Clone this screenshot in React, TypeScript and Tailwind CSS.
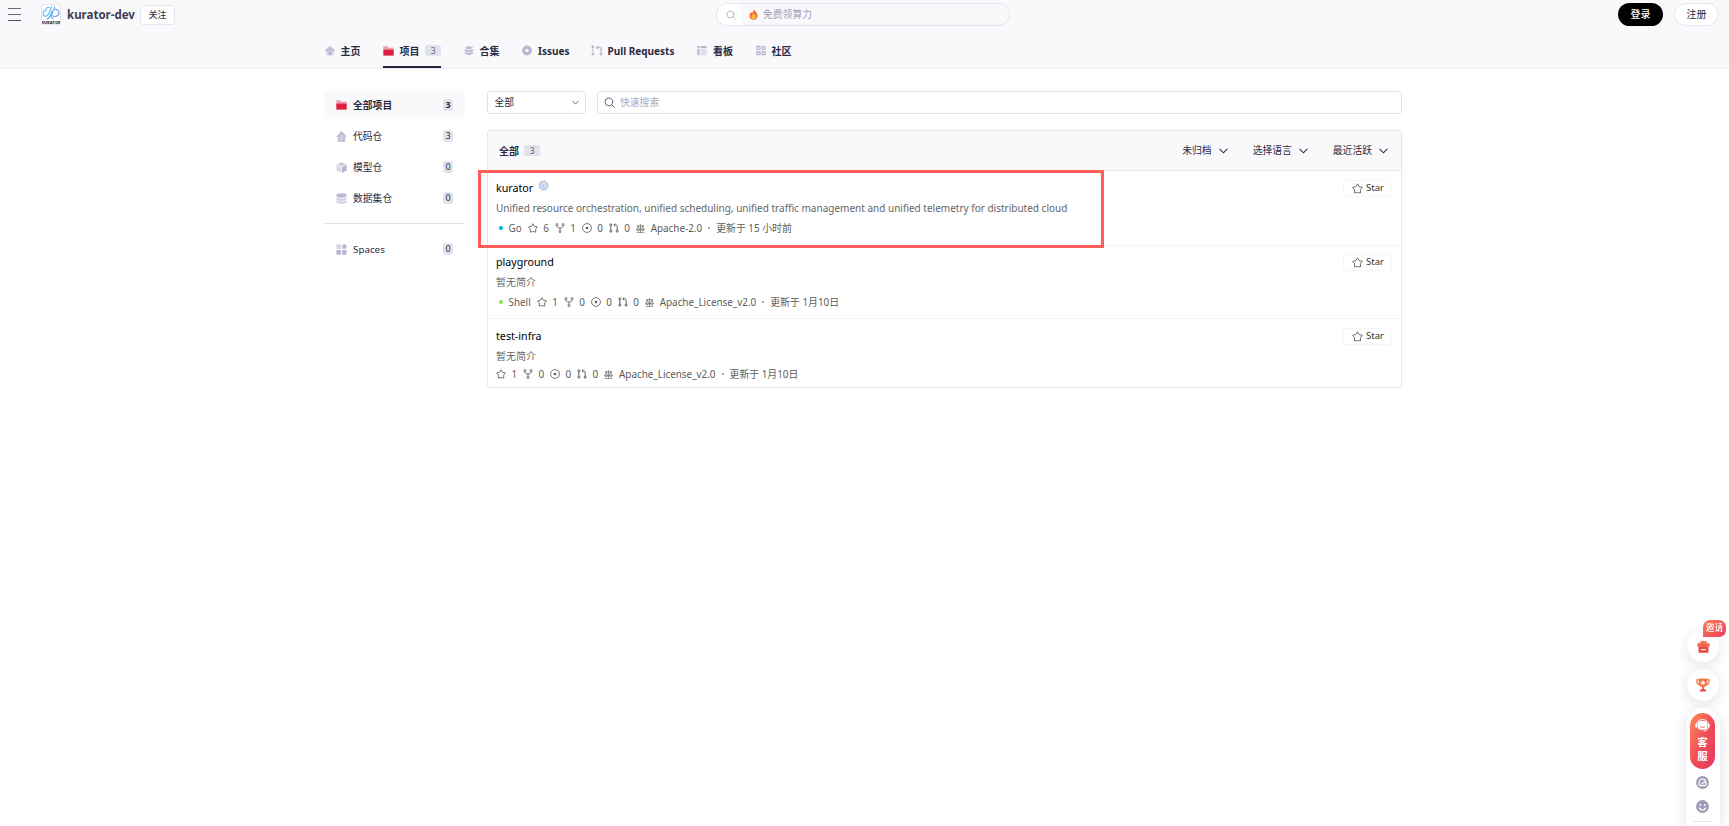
import type { ReactNode } from 'react';
import clsx from 'clsx';

interface IconProps {
  className?: string;
}

/**
 * 图标
 */
function HomeIcon({ className }: IconProps) {
  return (
    <svg className={className} viewBox="0 0 12 12">
      <path d="M1.6 5.500h8.800v6.200H1.600z" fill="#d5d4e3" />
      <path d="M6 .2 11.800 5.800v1.300H.2V5.800z" fill="#c3c2d6" />
      <path d="M4.500 7.700h3v4h-3z" fill="#b3b2cb" />
    </svg>
  );
}

function FolderIcon({ className }: IconProps) {
  return (
    <svg className={className} viewBox="0 0 12 11">
      <path d="M.3.4h4.4l1.2 1.5h5.8V6H.3z" fill="#f09dac" />
      <path d="M.3 4h11.4v6.6H.3z" fill="#dd2040" />
    </svg>
  );
}

function LayersIcon({ className }: IconProps) {
  return (
    <svg className={className} viewBox="0 0 12 12" fill="#b9b8cf">
      <path d="M6 .5 11.500 2.700 6 4.900.5 2.700z" />
      <path d="M.5 5.300 2.400 4.500 6 6l3.600-1.500 1.900.8v.9L6 8.300.5 6.200z" />
      <path d="M.5 8.600 2.400 7.800 6 9.300l3.600-1.500 1.900.8v.9L6 11.600.5 9.500z" />
    </svg>
  );
}

function IssueSolidIcon({ className }: IconProps) {
  return (
    <svg className={className} viewBox="0 0 12 12">
      <circle cx="6" cy="6" r="4" fill="none" stroke="#b9b8cf" strokeWidth="3.8" />
      <circle cx="6" cy="6" r="1.6" fill="#f1f1f6" />
    </svg>
  );
}

function PullSolidIcon({ className }: IconProps) {
  return (
    <svg className={className} viewBox="0 0 14 12" fill="#b9b8cf">
      <circle cx="2.2" cy="2" r="1.7" />
      <circle cx="2.2" cy="10" r="1.7" />
      <circle cx="11.8" cy="10" r="1.7" />
      <path d="M5.400 2.700 8.600.1v1.400h1.100c1.700 0 2.900 1.100 2.900 2.800v4H11v-4c0-.8-.5-1.200-1.400-1.200h-1v2z" />
      <path d="M1.500 4h1.400v4H1.500z" opacity=".7" />
    </svg>
  );
}

function BoardIcon({ className }: IconProps) {
  return (
    <svg className={className} viewBox="0 0 12 12" fill="#b9b8cf">
      <path d="M.4.6H3v2.700H.4zM4.200.6h7.400v2.700H4.200zM.4 4.300H3v7.300H.4z" />
      <path d="M4.200 4.300h7.400v7.300H4.200z" fill="#dfdfe9" />
    </svg>
  );
}

function CommunityIcon({ className }: IconProps) {
  return (
    <svg className={className} viewBox="0 0 12 12" fill="none" stroke="#b9b8cf" strokeWidth="1.7">
      <path d="M1.1 1.1h3.500v3.500H1.100zM1.100 7.400h3.500v3.500H1.100zM7.400 7.400h3.500v3.500H7.400z" />
      <circle cx="9.2" cy="2.9" r="1.9" />
    </svg>
  );
}

function RepoIcon({ className }: IconProps) {
  return (
    <svg className={className} viewBox="0 0 12 12">
      <path d="M6 .1 11.800 6.300H.2z" fill="#b9b8cf" />
      <path d="M2 5h8v6.700H2z" fill="#bebdd2" />
      <path d="M4 5.400h4M4 7.400h4M4 9.400h4" stroke="#f3f3f8" strokeWidth=".8" />
    </svg>
  );
}

function ModelIcon({ className }: IconProps) {
  return (
    <svg className={className} viewBox="0 0 12 12">
      <path d="M6 .3 11.500 2.500 6 4.900.5 2.500z" fill="#cccbdd" />
      <path d="M.4 3.300 5.600 5.600v6.200L.4 9.400z" fill="#d8d7e5" />
      <path d="M11.600 3.300 6.400 5.600v6.200l5.200-2.400z" fill="#b3b2cb" />
    </svg>
  );
}

function DatasetIcon({ className }: IconProps) {
  return (
    <svg className={className} viewBox="0 0 12 12">
      <path d="M.6 2.3h10.8v7.5c0 1-2.2 1.8-5.4 1.8S.6 10.8.6 9.8z" fill="#cfcedf" />
      <ellipse cx="6" cy="2.3" rx="5.4" ry="1.9" fill="#b9b8cf" />
      <path d="M.6 5c1.5 1.5 9.3 1.5 10.8 0M.6 8c1.5 1.5 9.3 1.5 10.8 0" fill="none" stroke="#fff" strokeWidth=".8" />
    </svg>
  );
}

function SpacesIcon({ className }: IconProps) {
  return (
    <svg className={className} viewBox="0 0 12 12">
      <rect x=".4" y=".4" width="5" height="5" rx=".6" fill="#d5d4e3" />
      <circle cx="9" cy="2.9" r="2.6" fill="#b9b8cf" />
      <rect x=".4" y="6.6" width="5" height="5" rx=".6" fill="#b9b8cf" />
      <rect x="6.6" y="6.6" width="5" height="5" rx=".6" fill="#b9b8cf" />
    </svg>
  );
}

function SearchIcon({ className }: IconProps) {
  return (
    <svg className={className} viewBox="0 0 12 12" fill="none" stroke="currentColor" strokeLinecap="round">
      <circle cx="5.3" cy="5.3" r="4.2" />
      <path d="m8.4 8.4 2.9 2.9" />
    </svg>
  );
}

function ChevronIcon({ className }: IconProps) {
  return (
    <svg className={className} viewBox="0 0 12 7" fill="none" stroke="currentColor" strokeWidth="1.4">
      <path d="m.8.8 5.2 5.2L11.2.8" />
    </svg>
  );
}

function StarIcon({ className }: IconProps) {
  return (
    <svg className={className} viewBox="0 0 12 12" fill="none" stroke="currentColor" strokeLinejoin="round">
      <path d="M6 .9 7.7 3.9 11.3 4.7 9.2 7.3 9.3 10.9 6 10.3 2.7 10.9 2.8 7.3.7 4.7 4.3 3.9z" />
    </svg>
  );
}

function ForkIcon({ className }: IconProps) {
  return (
    <svg className={className} viewBox="0 0 12 12" fill="none" stroke="currentColor">
      <circle cx="2.3" cy="2" r="1.3" />
      <circle cx="9.7" cy="2" r="1.3" />
      <circle cx="6" cy="10.2" r="1.3" />
      <path d="M2.300 3.300c0 2.200 1.500 2.600 3.700 2.600s3.700-.4 3.700-2.600M6 5.900v3" />
    </svg>
  );
}

function IssueIcon({ className }: IconProps) {
  return (
    <svg className={className} viewBox="0 0 12 12" fill="none" stroke="currentColor">
      <circle cx="6" cy="6" r="5.3" />
      <circle cx="6" cy="6" r="1.6" fill="currentColor" stroke="none" />
    </svg>
  );
}

function PullIcon({ className }: IconProps) {
  return (
    <svg className={className} viewBox="0 0 12 12" fill="none" stroke="currentColor" strokeWidth="1.2">
      <circle cx="2.2" cy="2.2" r="1.2" />
      <circle cx="2.2" cy="9.8" r="1.2" />
      <circle cx="9.8" cy="9.8" r="1.2" />
      <path d="M2.2 3.5v5M9.8 8.5V4c0-1.2-.6-1.8-1.7-1.8H6M7.5.6 5.9 2.2l1.6 1.6" />
    </svg>
  );
}

function LicenseIcon({ className }: IconProps) {
  return (
    <svg className={className} viewBox="0 0 12 12" fill="none" stroke="currentColor" strokeWidth=".9">
      <path d="M6 .3v11M1.200 2.300h9.600M.8 11.200h10.400M3 2.500 1 7.500M3 2.500l1.900 5M9 2.500l-1.900 5M9 2.500l2 5" />
      <path d="M.7 7.500c.4 1.700 4 1.700 4.400 0zM6.900 7.500c.4 1.700 4 1.700 4.400 0z" />
    </svg>
  );
}

function GearBadge({ className }: IconProps) {
  return (
    <svg className={className} viewBox="0 0 12 12">
      <circle cx="6" cy="6" r="4.8" fill="#bccbe3" stroke="#bccbe3" strokeWidth="1.8" strokeDasharray="2.400 1.370" />
      <circle cx="6" cy="6" r="2.7" fill="none" stroke="#eef3fb" strokeWidth=".9" />
      <path d="M7.500 6H6" stroke="#eef3fb" />
    </svg>
  );
}

function KuratorLogo() {
  return (
    <div className="flex h-[21px] w-5 flex-col items-center overflow-hidden rounded-[2px] border border-[#e6e6f0] bg-white">
      <svg className="h-4 w-[18px] shrink-0" viewBox="0 0 18 15" fill="none" strokeWidth="1.2">
        <path d="M7.8 2.3C5.5.8 3.8 3 3.9 4.7.6 5.2-.1 10.3 3.6 10.8c1.7.2 2.4-.8 3.1-2.5L10 .7" stroke="#62c2f8" />
        <path d="M10.2 5.3 7.9 11c-.7 1.9-2.3 2-3 2.9" stroke="#5aaef8" />
        <path d="M13 1 9.4 9.7c-.8 2 .5 3.7 2.2 2.9" stroke="#63b5fa" />
        <path d="M12.2 4c4.8-1.3 6.3 4.9 2.7 6.5-1.6.7-3.7.4-4.8-.6" stroke="#7d9df5" />
      </svg>
      <span className="font-['Open_Sans',sans-serif] text-[4px] leading-[3px] font-extrabold text-[#333]">KURATOR</span>
    </div>
  );
}

/**
 * 顶部栏
 */
function TopBar() {
  return (
    <div className="flex h-[29px] items-center">
      <div className="flex w-[716px] items-center">
        <div className="ml-2 flex w-[13px] flex-col gap-[5px]">
          <span className="h-px bg-[#696a80]" />
          <span className="h-px bg-[#696a80]" />
          <span className="h-px bg-[#50516a]" />
        </div>
        <div className="ml-5">
          <KuratorLogo />
        </div>
        <h1 className="ml-[6px] w-[68px] text-[11.5px] font-bold whitespace-nowrap text-[#3c3d54]">kurator-dev</h1>
        <button className="ml-[5px] h-5 w-[35px] rounded-[3px] border border-[#e6e6f0] bg-white text-[9px]">关注</button>
      </div>
      <div className="flex h-[23px] w-[294px] items-center overflow-hidden rounded-full border border-[#e4e4ee]">
        <div className="flex h-full w-[25px] items-center justify-center bg-white pl-[2px] text-[#aaaabe]">
          <SearchIcon className="h-[10px] w-[10px]" />
        </div>
        <svg className="ml-[7px] h-[11px] w-[9px]" viewBox="0 0 9 11">
          <path d="M5 .3C5.3 2 8.7 4 8.5 7c-.1 2.2-1.7 3.7-4 3.7S.5 9.2.5 7c0-1.8 1-3 1.7-3.9l.7 1.1C4 3.3 4.6 2 5 .3z" fill="#fb6334" />
          <path d="M4.600 3.800c.5 1.300 2.300 2.200 2.200 4 0 1.300-1 2.300-2.300 2.300S2.200 9.200 2.200 7.900s1.700-2.400 2.400-4.100z" fill="#ffbd36" />
        </svg>
        <span className="ml-[5px] pt-px text-[9.8px] text-[#9d9db5]">免费领算力</span>
      </div>
      <div className="mr-[10px] ml-auto flex gap-[11px]">
        <button className="h-[23px] w-[45px] rounded-full bg-black text-[10px] font-medium text-white">登录</button>
        <button className="h-[23px] w-[45px] rounded-full border border-[#e4e4ee] bg-white text-[10px]">注册</button>
      </div>
    </div>
  );
}

function CountBadge({ count, wide = false, bold = false }: { count: number; wide?: boolean; bold?: boolean }) {
  return (
    <span
      className={clsx(
        'flex items-center justify-center rounded-[3px] bg-[#e2e2ed]',
        wide ? 'h-[11px] w-4 text-[9px] font-normal text-[#62637b]' : 'h-3 w-[10px] text-[9px]',
        bold && 'font-bold'
      )}
    >
      {count}
    </span>
  );
}

const TABS: { label: string; width: string; gap: string; icon: ReactNode; count?: number }[] = [
  { label: '主页', width: 'w-5', gap: 'gap-[6px]', icon: <HomeIcon className="h-[11px] w-[10px]" /> },
  { label: '项目', width: 'w-5', gap: 'gap-[5.5px]', icon: <FolderIcon className="h-[10px] w-[11px]" />, count: 3 },
  { label: '合集', width: 'w-5', gap: 'gap-[6px]', icon: <LayersIcon className="h-[11px] w-[10px]" /> },
  { label: 'Issues', width: 'w-[30px]', gap: 'gap-[6px]', icon: <IssueSolidIcon className="h-[11px] w-[10px]" /> },
  { label: 'Pull Requests', width: 'w-[67px]', gap: 'gap-[5px]', icon: <PullSolidIcon className="h-[11px] w-3" /> },
  { label: '看板', width: 'w-5', gap: 'gap-[6px]', icon: <BoardIcon className="h-[11px] w-[10px]" /> },
  { label: '社区', width: 'w-5', gap: 'gap-[6px]', icon: <CommunityIcon className="h-[11px] w-[10px]" /> },
];

function Tabs() {
  return (
    <nav className="flex h-[39px] gap-[22.5px] pl-[324.5px]">
      {TABS.map((tab) => (
        <a
          key={tab.label}
          className={clsx('flex items-center border-b-2 pt-[6px]', tab.gap, tab.count ? 'border-[#26273c]' : 'border-transparent')}
        >
          {tab.icon}
          <span className={clsx('pt-px text-[10px] font-bold whitespace-nowrap', tab.width)}>{tab.label}</span>
          {tab.count && <CountBadge count={tab.count} wide />}
        </a>
      ))}
    </nav>
  );
}

/**
 * 左侧分类
 */
const CATEGORIES = [
  { label: '全部项目', count: 3, icon: <FolderIcon className="h-[10px] w-[11px]" />, active: true },
  { label: '代码仓', count: 3, icon: <RepoIcon className="h-[11px] w-[11px]" /> },
  { label: '模型仓', count: 0, icon: <ModelIcon className="h-[11px] w-[11px]" /> },
  { label: '数据集仓', count: 0, icon: <DatasetIcon className="h-[11px] w-[11px]" /> },
];

function SideItem({ label, count, icon, active }: { label: string; count: number; icon: ReactNode; active?: boolean }) {
  return (
    <li className={clsx('flex h-7 items-center rounded-[3px] pr-3 pl-[11.5px]', active && 'bg-[#f9f9fc] font-bold')}>
      {icon}
      <span className="ml-[6.5px] pt-[2px] text-[9.8px]">{label}</span>
      <span className="ml-auto">
        <CountBadge count={count} bold={active} />
      </span>
    </li>
  );
}

function Sidebar() {
  return (
    <aside className="w-[141px]">
      <ul className="flex flex-col gap-[3px]">
        {CATEGORIES.map((item) => (
          <SideItem key={item.label} {...item} />
        ))}
      </ul>
      <hr className="mt-[11px] mb-[11px] border-[#e2e2ed]" />
      <ul>
        <SideItem label="Spaces" count={0} icon={<SpacesIcon className="h-[11px] w-[11px]" />} />
      </ul>
    </aside>
  );
}

/**
 * 项目列表
 */
interface Repo {
  name: string;
  desc: string;
  lang?: string;
  langColor?: string;
  stats: [number, number, number, number];
  license: string;
  updated: string;
  badge?: boolean;
}

const REPOS: Repo[] = [
  {
    name: 'kurator',
    desc: 'Unified resource orchestration, unified scheduling, unified traffic management and unified telemetry for distributed cloud',
    lang: 'Go',
    langColor: 'bg-[#00add8]',
    stats: [6, 1, 0, 0],
    license: 'Apache-2.0',
    updated: '更新于 15 小时前',
    badge: true,
  },
  {
    name: 'playground',
    desc: '暂无简介',
    lang: 'Shell',
    langColor: 'bg-[#89e051]',
    stats: [1, 0, 0, 0],
    license: 'Apache_License_v2.0',
    updated: '更新于 1月10日',
  },
  {
    name: 'test-infra',
    desc: '暂无简介',
    stats: [1, 0, 0, 0],
    license: 'Apache_License_v2.0',
    updated: '更新于 1月10日',
  },
];

const STAT_ICONS = [StarIcon, ForkIcon, IssueIcon, PullIcon];
const ROW_HEIGHTS = ['h-[75px]', 'h-[73px]', 'h-[68px]'];
const TITLE_MARGINS = ['mt-[9px]', 'mt-2', 'mt-[9px]'];
const META_MARGINS = ['mt-[6px]', 'mt-[6px]', 'mt-[4px]'];
const STAR_MARGINS = ['mt-[9px]', 'mt-2', 'mt-[9px]'];

function RepoRow({ repo, index }: { repo: Repo; index: number }) {
  return (
    <li className={clsx('flex justify-between pr-[9px] pl-2', ROW_HEIGHTS[index], index < 2 && 'border-b border-[#f4f4f8]')}>
      <div>
        <div className={clsx('flex h-4 items-center text-[10.7px] text-black', TITLE_MARGINS[index])}>
          {repo.name}
          {repo.badge && <GearBadge className="mb-[6px] ml-[5px] h-[11px] w-[11px]" />}
        </div>
        <p className="mt-[5px] h-[14px] text-[10px] leading-[14px] whitespace-nowrap text-[#666]">{repo.desc}</p>
        <div className={clsx('flex h-[14px] items-center text-[9.9px] whitespace-nowrap text-[#5c5c5c]', META_MARGINS[index])}>
          {repo.lang && (
            <>
              <span className={clsx('mr-[5.5px] ml-[3px] h-1 w-1 rounded-full', repo.langColor)} />
              <span className="mr-[6px]">{repo.lang}</span>
            </>
          )}
          {repo.stats.map((value, i) => {
            const Icon = STAT_ICONS[i];
            return (
              <span key={i} className="flex w-[27px] items-center gap-[5.5px]">
                <Icon className="h-[10px] w-[10px]" />
                {value}
              </span>
            );
          })}
          <LicenseIcon className="h-[9px] w-[9px]" />
          <span className="ml-[6px]">{repo.license}</span>
          <span className="mx-[6px] h-[2px] w-[2px] rounded-full bg-[#8a8a9a]" />
          <span>{repo.updated}</span>
        </div>
      </div>
      <button
        className={clsx(
          'flex h-[17px] w-[49px] items-center justify-center gap-[3px] rounded-[3px] border border-[#f6f6f9] pl-px text-[9.6px] text-[#333]',
          STAR_MARGINS[index]
        )}
      >
        <StarIcon className="h-[11px] w-[11px] text-[#666]" />
        Star
      </button>
    </li>
  );
}

function ProjectList() {
  return (
    <main className="w-[915px]">
      <div className="flex gap-[11px]">
        <div className="flex h-[23px] w-[99px] items-center justify-between rounded-[3px] border border-[#e2e2ed] px-[6.5px] text-[9.8px]">
          <span className="pt-[2px]">全部</span>
          <ChevronIcon className="h-[5px] w-[7px] text-[#444]" />
        </div>
        <div className="flex h-[23px] flex-1 items-center gap-[5px] rounded-[3px] border border-[#e2e2ed] px-[6px] text-[9.8px] text-[#aaaabb]">
          <SearchIcon className="h-[11px] w-[11px] text-[#55566a]" />
          <span className="pt-px">快速搜索</span>
        </div>
      </div>
      <section className="mt-4 rounded-[3px] border border-[#e6e6ef]">
        <header className="flex h-10 items-center gap-[5px] border-b border-[#e6e6ef] bg-[#f9f9fc] pr-[13px] pl-[11px]">
          <span className="pt-[2px] text-[10px] font-bold">全部</span>
          <CountBadge count={3} wide />
          <div className="ml-auto flex gap-[25px] text-[9.8px]">
            {['未归档', '选择语言', '最近活跃'].map((label) => (
              <span key={label} className="flex items-center gap-[7px]">
                <span className="pt-[2px]">{label}</span>
                <ChevronIcon className="h-[6px] w-[9px]" />
              </span>
            ))}
          </div>
        </header>
        <div className="relative">
          <ul>
            {REPOS.map((repo, i) => (
              <RepoRow key={repo.name} repo={repo} index={i} />
            ))}
          </ul>
          {/* 高亮框 */}
          <div className="pointer-events-none absolute -top-[1px] -left-[10px] h-[78px] w-[626px] border-3 border-[#ff5c5a]" />
        </div>
      </section>
    </main>
  );
}

/**
 * 右下角悬浮工具
 */
function FloatingTools() {
  return (
    <div className="fixed right-[9px] bottom-0 flex w-[34px] flex-col items-center">
      <div className="relative flex h-8 w-8 items-center justify-center rounded-full bg-white shadow-[0_3px_14px_rgba(0,0,0,0.12)]">
        <svg className="h-[13px] w-[13px]" viewBox="0 0 13 13">
          <path d="M1 3.200h2.600L3 .8l2 .8L6.500.5 8 1.600l2-.8-.6 2.400H12a.7.700 0 0 1 .7.700v2.600H.3V3.900A.7.700 0 0 1 1 3.200z" fill="#f5694c" />
          <path d="M1.500 6.300h10V12a.7.700 0 0 1-.7.700H2.200a.7.700 0 0 1-.7-.7z" fill="#e44b44" />
          <path d="M4 9.600h5" stroke="#fff" strokeWidth="1.1" />
        </svg>
        <span className="absolute -top-[10px] left-4 flex h-[17px] w-[23px] items-center justify-center rounded-[7px] rounded-bl-none bg-linear-to-br from-[#ff7d4d] to-[#e83a5e] text-[8.7px] font-medium whitespace-nowrap text-white">
          邀请
        </span>
      </div>
      <div className="mt-[7px] flex h-8 w-8 items-center justify-center rounded-full bg-white shadow-[0_3px_14px_rgba(0,0,0,0.12)]">
        <svg className="h-[14px] w-[14px]" viewBox="0 0 14 14">
          <path d="M3 1.800H.9v2c0 1.700 1 2.800 2.700 2.900M11 1.800h2.100v2c0 1.700-1 2.800-2.700 2.900" fill="none" stroke="#f37a4c" strokeWidth="1.2" />
          <path d="M2.700.4h8.600v4.800C11.300 8 9.300 9.300 7 9.300S2.700 8 2.700 5.200z" fill="#f47a4c" />
          <path d="M6.200 9h1.600v2.500H10v2H4v-2h2.200z" fill="#e5473f" />
          <path d="m7 2.200.8 1.500 1.700.3-1.200 1.200.3 1.700L7 6.100l-1.600.8.3-1.700L4.500 4l1.700-.3z" fill="#fff" />
        </svg>
      </div>
      <div className="mt-[7px] mr-px flex h-[118px] w-[34px] flex-col items-center rounded-t-[17px] bg-white pt-[5px] shadow-[0_3px_14px_rgba(0,0,0,0.12)]">
        <div className="flex h-14 w-[25px] shrink-0 flex-col items-center rounded-full bg-linear-to-br from-[#ff8a50] via-[#ef4e58] to-[#e63560] pt-[6px] text-[10.5px] leading-[13.5px] font-bold text-white">
          <svg className="mb-1 h-[13px] w-[15px] shrink-0" viewBox="0 0 15 13">
            <path d="M1.600 5.500C1.600 2.300 4.200.6 7.500.6s5.900 1.700 5.900 4.900M13 8.500c0 2.300-1.700 3.500-4.500 3.700" fill="none" stroke="#fff" />
            <rect x="2.7" y="2" width="9.6" height="8.8" rx="3" fill="#fff" />
            <rect x=".3" y="4.6" width="2" height="4.2" rx="1" fill="#fff" />
            <rect x="12.7" y="4.6" width="2" height="4.2" rx="1" fill="#fff" />
            <path d="M5.200 7.500c1.200 1.300 3.400 1.300 4.600 0" fill="none" stroke="#f0655a" />
          </svg>
          <span>客</span>
          <span>服</span>
        </div>
        <svg className="mt-[7px] h-[13px] w-[13px] shrink-0" viewBox="0 0 13 13">
          <circle cx="6.5" cy="6.5" r="6.4" fill="#9c9cb4" />
          <path d="M3.300 6.300C3.500 4.200 5 2.900 6.800 3c1.500.1 2.700 1.200 3 2.800M3.300 6.300c-.9 1.300-.2 3.300 1.500 3.300h3.500c2.300 0 2.600-3 .6-3.400-1.900-.4-2.200 2-3.700 1.900" fill="none" stroke="#fff" strokeWidth="1.2" />
        </svg>
        <svg className="mt-[11px] h-[13px] w-[13px] shrink-0" viewBox="0 0 13 13">
          <circle cx="6.5" cy="6.5" r="6.4" fill="#9c9cb4" />
          <circle cx="4.3" cy="4.9" r="1" fill="#fff" />
          <circle cx="8.7" cy="4.9" r="1" fill="#fff" />
          <path d="M3.300 7.500c.8 3.300 5.600 3.300 6.400 0" fill="none" stroke="#fff" strokeWidth="1.2" />
        </svg>
        <span className="mt-2 h-px w-5 shrink-0 bg-[#e6e6ee]" />
      </div>
    </div>
  );
}

export default function App() {
  return (
    <div className="h-[826px] overflow-hidden bg-white font-['Noto_Sans','Noto_Sans_CJK_SC',sans-serif] text-[#2a2b3f]">
      <header className="h-[69px] border-b border-[#ededf4] bg-[#f9f9fc]">
        <TopBar />
        <Tabs />
      </header>
      <div className="mt-[22px] ml-[324px] flex gap-[22px]">
        <Sidebar />
        <ProjectList />
      </div>
      <FloatingTools />
    </div>
  );
}
